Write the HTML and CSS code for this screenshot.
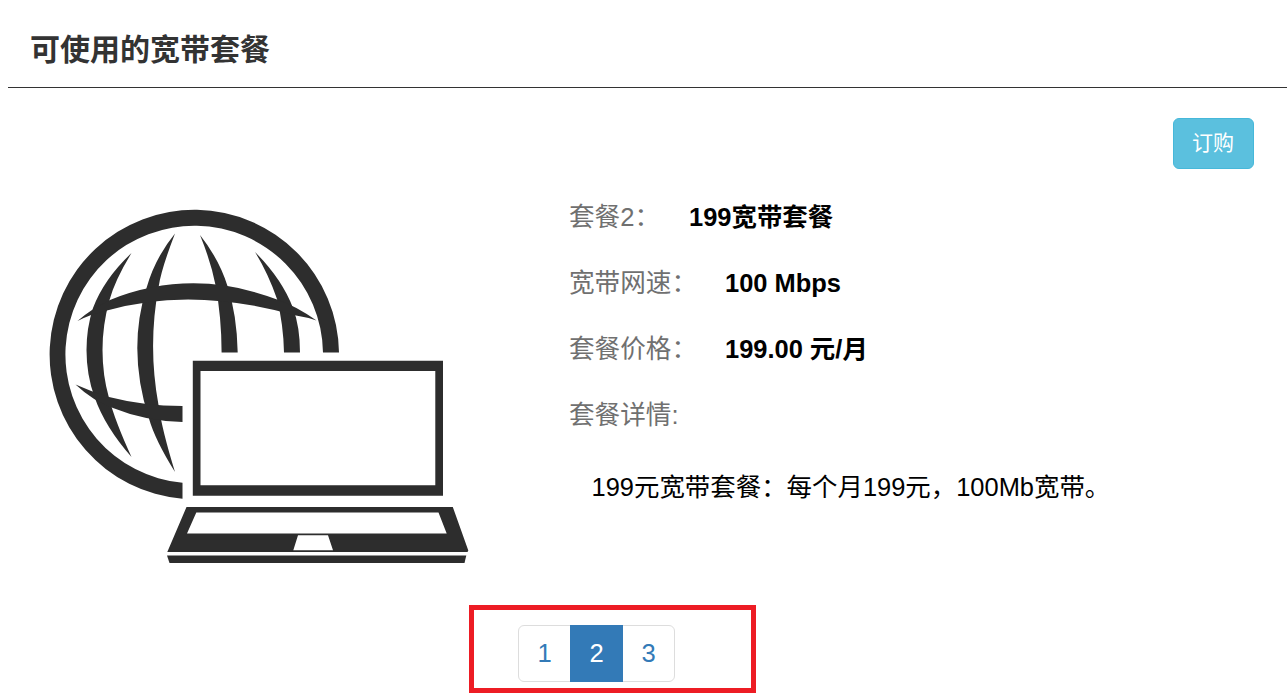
FILE: index.html
```html
<!DOCTYPE html>
<html lang="zh-CN">
<head>
<meta charset="utf-8">
<title>可使用的宽带套餐</title>
<link rel="stylesheet" href="styles.css">
</head>
<body>
<main class="page">
  <header class="header"><h1 class="title">可使用的宽带套餐</h1></header>
  <div class="actions"><button class="order" type="button">订购</button></div>
  <section class="plan">
    <svg class="picture" viewBox="40 200 440 370" width="440" height="370" fill="#2d2d2d" aria-hidden="true">
      <!-- globe rim -->
      <path d="M182.500 498.700A144.700 144.700 0 1 1 339 352.600H323A128.800 128.800 0 1 0 182.500 482.800Z"/>
      <!-- meridians -->
      <path d="M131.500 253Q115 280 109.500 300Q102.500 325 102.500 350Q102.500 375 109 398Q115 421 131.500 457Q105 427 94.500 397Q86.500 375 86.500 350Q86.500 328 93 308Q104 279 131.500 253Z"/>
      <path d="M175 233.500Q161 270 158.800 286Q147.500 345 158.500 405Q162 430 175 472Q155 440 148.800 418Q127 350 146.500 288Q155 258 175 233.500Z"/>
      <path d="M200 235Q219 259 227.500 286Q237 315 237.700 352.600H221.600Q221.500 317 215.500 285Q211 262 200 235Z"/>
      <path d="M255 252Q282 279 293 308Q300 327 300 352.600H284Q283.500 325 277 299Q268 273 255 252Z"/>
      <!-- parallels -->
      <path d="M77.500 321Q91 309 110 300Q192 267 277 299.500Q296 306 316.500 320.500Q306 317 296 315.500Q192 286 107 310.500Q91 314 77.500 321Z"/>
      <path d="M75.500 384.500Q92 392 109 397Q144 406 182.500 406V422Q145 421 113 408Q93 401 75.500 384.500Z"/>
      <!-- laptop -->
      <path fill-rule="evenodd" d="M192.800 360.800H443V495.700H192.800ZM200.500 371V485.300H435.300V371Z"/>
      <path fill-rule="evenodd" d="M186.500 507H452.800L468.300 550.500L467.500 552H167.300ZM196.300 512.500L187 533.500H446.700L438.500 512.500ZM298 535.300L293.300 550.300H333L328 535.300Z"/>
      <path d="M167 555.600H466.300L464.500 562.900H169.500Z"/>
    </svg>
    <div class="details">
      <div class="row"><span class="label short">套餐2：</span><strong class="value">199宽带套餐</strong></div>
      <div class="row"><span class="label">宽带网速：</span><strong class="value">100 Mbps</strong></div>
      <div class="row"><span class="label">套餐价格：</span><strong class="value">199.00 元/月</strong></div>
      <div class="row"><span class="label">套餐详情:</span></div>
      <p class="description">199元宽带套餐：每个月199元，100Mb宽带。</p>
    </div>
  </section>
  <nav class="pager-frame">
    <div class="pager"><a class="item">1</a><a class="item active">2</a><a class="item">3</a></div>
  </nav>
</main>
</body>
</html>
```
FILE: styles.css
```css
* { box-sizing: border-box; }
body {
  margin: 0;
  background: #fff;
  color: #000;
  font-family: "Liberation Sans", "Noto Sans CJK SC", sans-serif;
  font-size: 25.6px;
}
.page { height: 699px; overflow: hidden; }
.header {
  height: 88px;
  margin-left: 8px;
  padding: 28px 0 0 22px;
  border-bottom: 1px solid #333;
}
.title {
  margin: 0;
  font-size: 30px;
  line-height: 44px;
  color: #333;
}
.actions {
  display: flex;
  justify-content: flex-end;
  padding: 30px 33px 0 0;
}
.order {
  width: 81px;
  height: 51px;
  padding: 0 1px 1px 0;
  border: 1px solid #46b8da;
  border-radius: 6px;
  background: #5bc0de;
  color: #fff;
  font: 21px/30px "Liberation Sans", "Noto Sans CJK SC", sans-serif;
}
.plan {
  display: flex;
  height: 436px;
  padding: 31px 0 0 40px;
}
.picture { flex: none; display: block; }
.details { padding: 0 0 0 89px; margin-top: -16px; }
.row {
  display: flex;
  height: 66px;
  line-height: 66px;
  white-space: nowrap;
}
.label {
  width: 156px;
  color: #707070;
}
.short { width: 120px; }
.value { font-size: 25.45px; }
.description {
  margin: 6px 0 0 22.5px;
  font-size: 25.45px;
  line-height: 66px;
  white-space: nowrap;
}
.pager-frame {
  width: 287px;
  height: 88px;
  margin-left: 469px;
  padding: 15px 0 0 44px;
  border: 5px solid #ed1c24;
}
.pager {
  display: flex;
  width: 157px;
  height: 57px;
  border: 1px solid #ddd;
  border-radius: 6px;
}
.item {
  flex: 1;
  color: #337ab7;
  line-height: 54px;
  text-align: center;
}
.active {
  flex: 0 0 53px;
  margin: -1px 0;
  padding-top: 1px;
  background: #337ab7;
  color: #fff;
}
```
